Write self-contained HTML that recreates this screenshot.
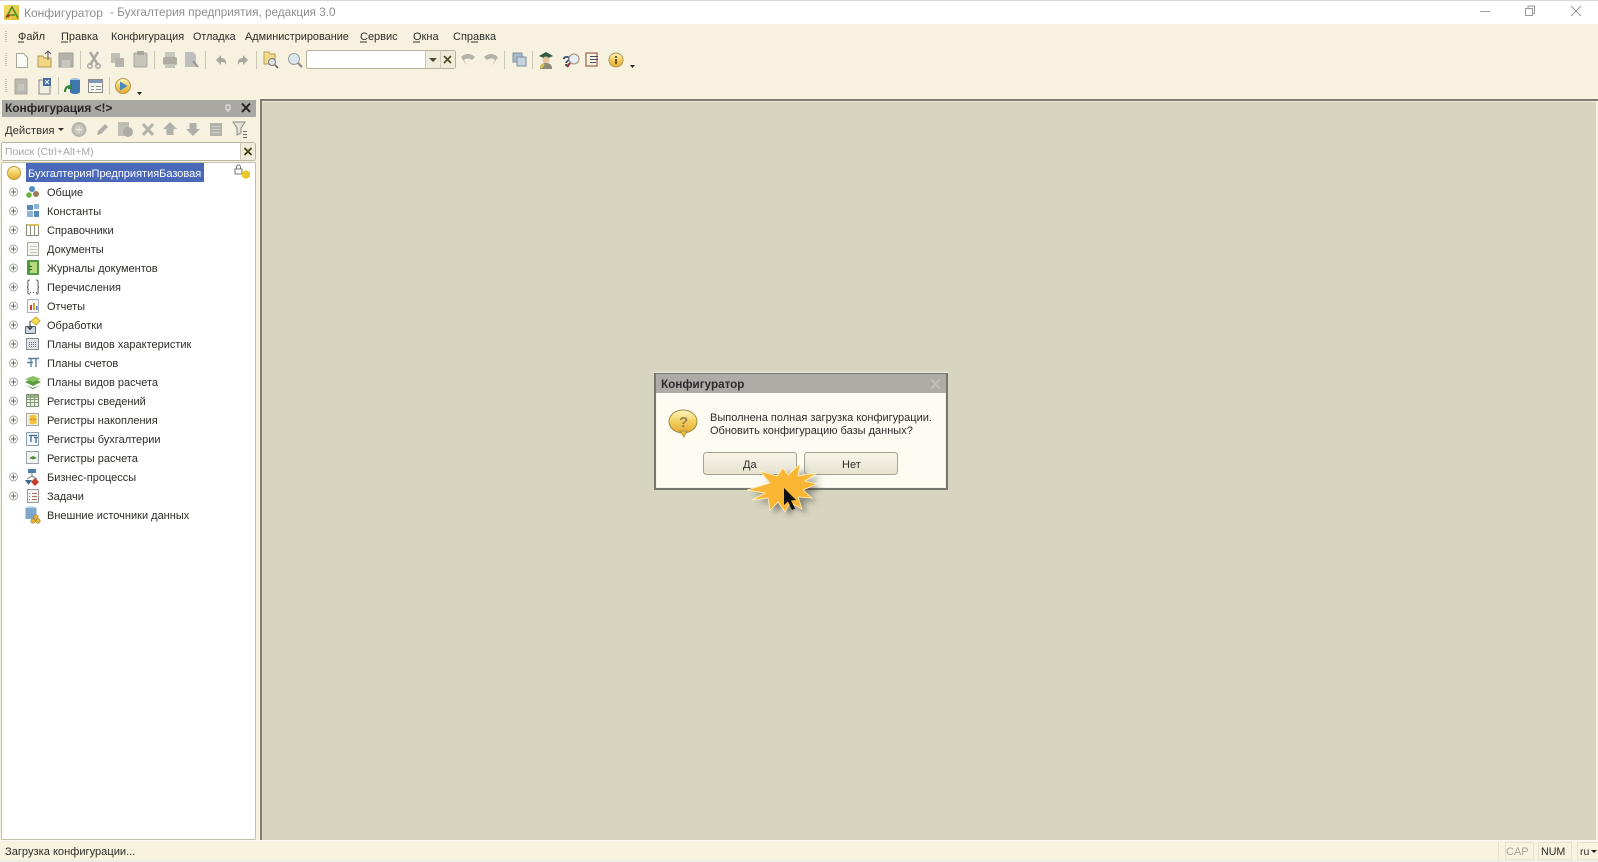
<!DOCTYPE html>
<html><head><meta charset="utf-8"><title>Конфигуратор</title>
<style>
html,body{margin:0;padding:0;width:1598px;height:862px;overflow:hidden;background:#f7f1df}
svg{display:block;filter:blur(.35px)}
text{font-family:"Liberation Sans",sans-serif;font-size:11px;fill:#2c2c28}
.m{fill:#33332e}
.sep{stroke:#cbc7b5;stroke-width:1}
</style></head><body>
<svg width="1598" height="862" viewBox="0 0 1598 862" xmlns="http://www.w3.org/2000/svg">
<defs>
<linearGradient id="ball" x1="0" y1="0" x2="0" y2="1"><stop offset="0" stop-color="#fff8c4"/><stop offset=".5" stop-color="#f2cf60"/><stop offset="1" stop-color="#e4aa30"/></linearGradient>
<linearGradient id="ic" x1="0" y1="0" x2="1" y2="1"><stop offset="0" stop-color="#f5e070"/><stop offset="1" stop-color="#dcb830"/></linearGradient>
<linearGradient id="btn" x1="0" y1="0" x2="0" y2="1"><stop offset="0" stop-color="#f8f5ea"/><stop offset="1" stop-color="#e6e2d0"/></linearGradient>
<filter id="sh" x="-30%" y="-30%" width="160%" height="160%"><feGaussianBlur stdDeviation="3"/></filter>
<g id="exp"><circle cx="0" cy="0" r="4" fill="#fff" stroke="#a8a8a0"/><path d="M-2.500 0H2.500M0-2.500V2.500" stroke="#666" stroke-width="1"/></g>
</defs>

<!-- window background -->
<rect width="1598" height="862" fill="#f7f1df"/>
<rect width="1598" height="24" fill="#ffffff"/>
<rect width="1598" height="1" fill="#d8d8d8"/>
<!-- title bar -->
<rect x="4" y="5" width="15" height="15" fill="url(#ic)"/>
<path d="M6 18L12 7l6 11M9 15h6" fill="none" stroke="#4a8a28" stroke-width="1.500"/>
<circle cx="8" cy="16" r="1.500" fill="#c02010"/>
<text x="24" y="17" style="font-size:12px;fill:#8e8e8e">Конфигуратор</text>
<text x="110" y="16" style="font-size:11.750px;fill:#8e8e8e">- Бухгалтерия предприятия, редакция 3.0</text>
<path d="M1480 11.500h10" stroke="#a0a0a0" stroke-width="1"/>
<path d="M1528 8.500v-2.500h6.500v7.500h-2" fill="none" stroke="#999" stroke-width="1"/>
<rect x="1525.500" y="8.500" width="7" height="7" fill="none" stroke="#999"/>
<path d="M1571 6l10 10M1581 6l-10 10" stroke="#999" stroke-width="1"/>

<!-- menu -->
<path d="M5 31.500h2M5 33.500h2M5 35.500h2M5 37.500h2M5 39.500h2M5 41.500h2" stroke="#c8c4b0"/>
<g class="m">
<text x="18" y="40">Файл</text>
<text x="61" y="40">Правка</text>
<text x="111" y="40" style="font-size:10.900px">Конфигурация</text>
<text x="193" y="40" style="font-size:10.800px">Отладка</text>
<text x="245" y="40" style="font-size:10.900px">Администрирование</text>
<text x="360" y="40">Сервис</text>
<text x="413" y="40">Окна</text>
<text x="453" y="40">Справка</text>
</g>
<path d="M18 42h6M61 42h7M360 42h7M413 42h7M471 42h7" stroke="#33332e" stroke-width="1"/>

<!-- toolbar 1 -->
<path d="M5 53.500h2M5 55.500h2M5 57.500h2M5 59.500h2M5 61.500h2M5 63.500h2M5 65.500h2" stroke="#c8c4b0"/>
<path d="M16.500 53.500h7l4 4v10H16.500z" fill="#fbfbf6" stroke="#a6a699"/>
<path d="M38 56h5l1 2h7v9H38z" fill="#f2d683" stroke="#b2985a"/><path d="M48 60v-8M45 54l3-3 3 3" fill="none" stroke="#556" stroke-width="1"/>
<rect x="59" y="53" width="14" height="14" fill="#b4b3aa" stroke="#a0a098"/><rect x="62" y="60" width="8" height="7" fill="#c9c8be"/>
<path d="M80.500 51v18" class="sep"/>
<path d="M90 52l8 13M98 52l-8 13" stroke="#a9a8a0" stroke-width="2.500"/><circle cx="90" cy="66" r="2.300" fill="none" stroke="#a9a8a0" stroke-width="1.500"/><circle cx="98" cy="66" r="2.300" fill="none" stroke="#a9a8a0" stroke-width="1.500"/>
<rect x="111" y="53" width="9" height="10" fill="#c0bfb5"/><rect x="115" y="58" width="9" height="9" fill="#b6b5ab"/>
<rect x="134" y="53" width="13" height="14" rx="1" fill="#c6c5bb" stroke="#a8a79d"/><rect x="137" y="51" width="7" height="4" fill="#a8a79d"/>
<path d="M154.500 51v18" class="sep"/>
<rect x="163" y="57" width="14" height="8" rx="2" fill="#aeada3"/><rect x="165" y="52" width="10" height="5" fill="#c8c7bd"/><rect x="165" y="64" width="10" height="4" fill="#c8c7bd"/>
<path d="M185 52h8l3 3v12h-11z" fill="#c0bfc0"/><path d="M193 61l5 6" stroke="#99988e" stroke-width="2"/>
<path d="M205.500 51v18" class="sep"/>
<path d="M216 60l5-5v3c4 0 6 3 5 7-1-3-3-3-5-3v3z" fill="#aaa99f"/>
<path d="M248 60l-5-5v3c-4 0-6 3-5 7 1-3 3-3 5-3v3z" fill="#aaa99f"/>
<path d="M256.500 51v18" class="sep"/>
<path d="M264 52h5l1 2h5v10h-11z" fill="#f4dc8a" stroke="#b89c52"/><circle cx="272" cy="62" r="3.500" fill="#dbe3ea" stroke="#777"/><path d="M275 65l3 3" stroke="#555" stroke-width="1.500"/>
<circle cx="294" cy="59" r="5.500" fill="#dce6ef" stroke="#a0a09c"/><path d="M298 63l4 4" stroke="#888" stroke-width="2"/>
<rect x="306.500" y="50.500" width="149" height="18" rx="2" fill="#fff" stroke="#b5b29a"/>
<rect x="425" y="51" width="30" height="17" fill="#efebda"/>
<path d="M425.500 51v17M440.500 51v17" stroke="#cfcbb8"/>
<path d="M429 58h8l-4 4z" fill="#4a4a30"/>
<path d="M444 56l7 7M451 56l-7 7" stroke="#4a4a20" stroke-width="1.600"/>
<path d="M461 57c4-4 10-4 14 0l-3 3c-3-2-6-2-8 0l3 6z" fill="#b3b2a8"/>
<path d="M498 57c-4-4-10-4-14 0l3 3c3-2 6-2 8 0l-3 6z" fill="#b3b2a8"/>
<path d="M504.500 51v18" class="sep"/>
<rect x="513" y="53" width="9" height="9" fill="#a9bdd0" stroke="#7d8ea0"/><rect x="517" y="57" width="9" height="9" fill="#c5d3e0" stroke="#7d8ea0"/>
<path d="M532.500 51v18" class="sep"/>
<path d="M539 56l7-4 7 4-7 3z" fill="#2f5a48"/><circle cx="546" cy="60" r="3.500" fill="#e3c49b"/><path d="M540 69c0-5 3-6 6-6s6 1 6 6z" fill="#8a8a78"/><path d="M541 68l3-4" stroke="#e6c83c" stroke-width="2"/>
<text x="562" y="66" style="font-size:15px;font-weight:bold;fill:#304a70">?</text><circle cx="574" cy="59" r="5" fill="#e6eef3" stroke="#a09078"/><path d="M570 63l-3 4" stroke="#a03030" stroke-width="2"/>
<rect x="586" y="53" width="11" height="13" fill="#fbf6e4" stroke="#98402c"/><path d="M590 56.500h8M590 59.500h8M590 62.500h6" stroke="#46506a"/>
<circle cx="616" cy="60" r="7" fill="url(#ball)" stroke="#b69450"/><rect x="615" y="59" width="2" height="5" fill="#7a5a20"/><rect x="615" y="56" width="2" height="2" fill="#7a5a20"/>
<path d="M630 65h5l-2.500 3z" fill="#222"/>

<!-- toolbar 2 -->
<path d="M5 79.500h2M5 81.500h2M5 83.500h2M5 85.500h2M5 87.500h2M5 89.500h2M5 91.500h2" stroke="#c8c4b0"/>
<rect x="15" y="79" width="12" height="15" fill="#bab9af" stroke="#a8a79d"/><rect x="18" y="84" width="6" height="7" fill="#c7c6bc"/>
<rect x="39" y="80" width="11" height="14" fill="#f0eee2" stroke="#8a8a80"/><rect x="43" y="78" width="8" height="8" fill="#3f6ca4"/><path d="M45 80l4 4M49 80l-4 4" stroke="#fff"/>
<path d="M58.500 77v18" class="sep"/>
<ellipse cx="75" cy="80" rx="5" ry="2" fill="#9ec4e2"/><rect x="70" y="80" width="10" height="12" fill="#3f78ad"/><ellipse cx="75" cy="92" rx="5" ry="2" fill="#3f78ad"/><path d="M65 92c0-4 2-6 6-6M71 84v4h-3" fill="none" stroke="#2d8a3d" stroke-width="2"/>
<rect x="88.500" y="79.500" width="14" height="13" fill="#f6f6f2" stroke="#8a8a88"/><rect x="89" y="80" width="13" height="3" fill="#7d99b8"/><path d="M91 86.500h3M91 89.500h3M96 86.500h5M96 89.500h5" stroke="#8a8a88"/>
<path d="M109.500 77v18" class="sep"/>
<circle cx="123" cy="86" r="7.500" fill="url(#ball)" stroke="#b69450"/><path d="M120 81.500l7.500 4.500-7.500 4.500z" fill="#4a86c0"/>
<path d="M137 92h5l-2.500 3z" fill="#222"/>

<!-- client -->
<rect x="260" y="99" width="1338" height="742" fill="#d7d4bf"/>
<rect x="260" y="99" width="1338" height="2" fill="#7f7d72"/>
<rect x="260" y="99" width="2" height="742" fill="#7f7d72"/>
<rect x="262" y="101" width="1336" height="1" fill="#ecead8"/>
<rect x="1596" y="101" width="2" height="740" fill="#f5f2e5"/>

<!-- left panel -->
<rect x="2" y="100" width="254" height="17" fill="#aaa8a2"/>
<text x="5" y="112" style="font-size:11.900px;font-weight:bold;fill:#262626">Конфигурация &lt;!&gt;</text>
<rect x="226" y="105" width="4" height="5" rx="1" fill="none" stroke="#f0f0f0"/><path d="M228 110v2" stroke="#eee"/>
<path d="M242 103.500l8 8.500M250 103.500l-8 8.500" stroke="#222" stroke-width="2"/>
<text x="5" y="134" style="font-size:11.300px" class="m">Действия</text>
<path d="M58 128h6l-3 3z" fill="#333"/>
<circle cx="79" cy="129.500" r="7.500" fill="#b8b7ad"/><circle cx="79" cy="129.500" r="5" fill="#c8c7bd"/><path d="M76 129.500h6M79 126.500v6" stroke="#eeeee4"/>
<path d="M97 135l1-4 7-7 3 3-7 7z" fill="#b0afa5"/>
<rect x="118" y="122" width="11" height="14" fill="#c0bfb5"/><circle cx="128" cy="132" r="5" fill="#adaca2"/>
<path d="M143 124l10 11M153 124l-10 11" stroke="#b3b2a8" stroke-width="3"/>
<path d="M170 122l7 7h-3.500v6h-7v-6H163z" fill="#aeb0aa"/>
<path d="M193 136l7-7h-3.500v-6h-7v6H186z" fill="#aeb0aa"/>
<rect x="210" y="123" width="12" height="13" fill="#b5b4aa"/><path d="M212 126.500h8M212 129.500h8M212 132.500h8" stroke="#ccc"/>
<path d="M233 122h12l-4 6v5l-4 2v-7z" fill="#e4e3da" stroke="#8a8a80"/><path d="M243 131.500h4M243 134.500h4M243 137.500h4" stroke="#6b6b60"/>

<rect x="1.500" y="142.500" width="254" height="18" rx="2" fill="#fff" stroke="#bab7a0"/>
<text x="5" y="155" style="font-size:10.500px;fill:#a6a6a6">Поиск (Ctrl+Alt+M)</text>
<rect x="241" y="143" width="14" height="17" fill="#efebda"/><path d="M240.500 143v17" stroke="#cfcbb8"/>
<path d="M244.500 148l7 7M251.500 148l-7 7" stroke="#3f3f18" stroke-width="1.800"/>

<!-- tree -->
<rect x="1.500" y="162.500" width="254" height="677" rx="1" fill="#fff" stroke="#c3c0a8"/>
<ellipse cx="14" cy="173" rx="6.500" ry="6.500" fill="url(#ball)" stroke="#c49b3a"/>
<rect x="26" y="163" width="178" height="19" fill="#4a68b8"/>
<text x="28" y="177" style="fill:#fff">БухгалтерияПредприятияБазовая</text>
<rect x="235" y="169" width="7" height="5" fill="none" stroke="#777"/><path d="M236.500 169v-2a2 2 0 0 1 4 0v2" fill="none" stroke="#777"/>
<path d="M242 172l4-2 4 2v5l-4 2-4-2z" fill="#e9c82d"/>

<g>
<use href="#exp" x="13.500" y="192"/><use href="#exp" x="13.500" y="211"/><use href="#exp" x="13.500" y="230"/><use href="#exp" x="13.500" y="249"/><use href="#exp" x="13.500" y="268"/><use href="#exp" x="13.500" y="287"/><use href="#exp" x="13.500" y="306"/><use href="#exp" x="13.500" y="325"/><use href="#exp" x="13.500" y="344"/><use href="#exp" x="13.500" y="363"/><use href="#exp" x="13.500" y="382"/><use href="#exp" x="13.500" y="401"/><use href="#exp" x="13.500" y="420"/><use href="#exp" x="13.500" y="439"/><use href="#exp" x="13.500" y="477"/><use href="#exp" x="13.500" y="496"/>
</g>
<!-- общие -->
<circle cx="32" cy="189" r="3" fill="#4f8fc4"/><circle cx="29" cy="195" r="2.800" fill="#6fb03f"/><circle cx="36" cy="194" r="3" fill="#9c7a52"/>
<!-- константы -->
<rect x="27" y="205" width="6" height="5" fill="#5a8ab8"/><rect x="34" y="204" width="5" height="5" fill="#8db5d5"/><rect x="27" y="211" width="6" height="6" fill="#8db5d5"/><rect x="34" y="211" width="5" height="6" fill="#5a8ab8"/>
<!-- справочники -->
<rect x="26.500" y="224.500" width="12" height="11" fill="#fff" stroke="#8d8d82"/><rect x="27" y="224" width="12" height="2" fill="#e2c25c"/><path d="M30.500 225v10M34.500 225v10" stroke="#8d8d82"/>
<!-- документы -->
<rect x="27.500" y="242.500" width="11" height="13" fill="#f5f5f0" stroke="#a8a8a0"/><path d="M30 246.500h7M30 249.500h7M30 252.500h7" stroke="#c4c4bc"/>
<!-- журналы -->
<rect x="27" y="260" width="12" height="15" rx="1" fill="#4f9a45"/><rect x="30" y="262" width="7" height="11" fill="#b7dc7e"/><path d="M29 266.500h3M29 269.500h3" stroke="#2c6a2c"/>
<!-- перечисления -->
<path d="M30 280c-3 0-2 2-2 4s0 3-1 3c1 0 1 1 1 3s-1 4 2 4M36 280c3 0 2 2 2 4s0 3 1 3c-1 0-1 1-1 3s1 4-2 4" fill="none" stroke="#555" stroke-width="1"/><path d="M30 292.500h1M33 292.500h1M36 292.500h1" stroke="#555"/>
<!-- отчеты -->
<rect x="27.500" y="299.500" width="11" height="13" fill="#f5f6fa" stroke="#aab0bc"/><rect x="30" y="305" width="2" height="5" fill="#c04030"/><rect x="33" y="303" width="2" height="7" fill="#e0a030"/><rect x="36" y="306" width="1.500" height="4" fill="#4a80b0"/>
<!-- обработки -->
<path d="M31 321l5-4 4 4-4 4z" fill="#f4dd55" stroke="#c8a830"/><rect x="25.500" y="326.500" width="10" height="7" rx="1" fill="#ccd8e4" stroke="#56606a"/><path d="M30 321v8M27.500 326.500l2.500 3 2.500-3" fill="none" stroke="#333"/>
<!-- планы видов хар -->
<rect x="26.500" y="338.500" width="12" height="11" fill="#dfe4ea" stroke="#8a8f95"/><path d="M29 342.500h8M29 344.500h8M29 346.500h8" stroke="#6a6f75" stroke-dasharray="1 1"/>
<!-- планы счетов -->
<path d="M28 358.500h10M31 358v9M34 358.500h5M36 358v9M27 362.500h6" stroke="#5d8098" stroke-width="1.400" fill="none"/>
<!-- планы видов расчета -->
<path d="M25 382l8-4 8 4-8 4z" fill="#5a9a40"/><path d="M25 379l8-3 8 3-8 3z" fill="#89c060"/><path d="M25 385l8 3 8-3-8 4z" fill="#3f7c30"/>
<!-- регистры сведений -->
<rect x="26.500" y="394.500" width="12" height="12" fill="#e4efdc" stroke="#7f8f75"/><rect x="27" y="395" width="11" height="3" fill="#9ab87a"/><path d="M30.500 395v11M34.500 395v11M27 399.500h11M27 402.500h11" stroke="#8a9a80"/>
<!-- регистры накопления -->
<rect x="26.500" y="413.500" width="12" height="12" fill="#f2f2ec" stroke="#a8a8a0"/><ellipse cx="33" cy="416.500" rx="4" ry="1.700" fill="#f0c83a"/><ellipse cx="33" cy="419.500" rx="4" ry="1.700" fill="#e6a92a"/><ellipse cx="33" cy="422.500" rx="4" ry="1.700" fill="#f0c83a"/>
<!-- регистры бухгалтерии -->
<rect x="26.500" y="432.500" width="12" height="13" fill="#f2f6fa" stroke="#8ea2b5"/><path d="M29 435.500h8M31 435v7M34 437.500h4M36 437v6" stroke="#3f6a88" stroke-width="1.300" fill="none"/>
<!-- регистры расчета -->
<rect x="26.500" y="451.500" width="12" height="12" fill="#f2f4f4" stroke="#9aa2a8"/><path d="M29 458l4-2 4 2-4 1.500z" fill="#4f8a38"/>
<!-- бизнес-процессы -->
<rect x="28" y="469" width="8" height="4" fill="#4f7fb0"/><path d="M32 473v3M27 479l5-3 5 3" fill="none" stroke="#777"/><path d="M25 480h7l-3.500 5z" fill="#3f6a90"/><path d="M35 478l4 4-4 4-4-4z" fill="#c83a2a"/>
<!-- задачи -->
<rect x="27.500" y="489.500" width="11" height="13" fill="#f4f4f0" stroke="#999"/><path d="M29 493.500h1M32 493.500h5M29 496.500h1M32 496.500h5M29 499.500h1M32 499.500h5" stroke="#b06a60"/>
<!-- внешние -->
<ellipse cx="31" cy="508" rx="5.500" ry="1.800" fill="#b9d2e6"/><rect x="25.500" y="508" width="11" height="11" fill="#7da8cc"/><circle cx="36" cy="517" r="2.200" fill="#e8b83c" stroke="#9a7420" stroke-width=".6"/><circle cx="33" cy="521" r="2.200" fill="#e8b83c" stroke="#9a7420" stroke-width=".6"/><circle cx="38" cy="521" r="2.200" fill="#e8b83c" stroke="#9a7420" stroke-width=".6"/>

<g>
<text x="47" y="196">Общие</text>
<text x="47" y="215">Константы</text>
<text x="47" y="234">Справочники</text>
<text x="47" y="253">Документы</text>
<text x="47" y="272">Журналы документов</text>
<text x="47" y="291">Перечисления</text>
<text x="47" y="310">Отчеты</text>
<text x="47" y="329">Обработки</text>
<text x="47" y="348">Планы видов характеристик</text>
<text x="47" y="367">Планы счетов</text>
<text x="47" y="386">Планы видов расчета</text>
<text x="47" y="405">Регистры сведений</text>
<text x="47" y="424">Регистры накопления</text>
<text x="47" y="443">Регистры бухгалтерии</text>
<text x="47" y="462">Регистры расчета</text>
<text x="47" y="481">Бизнес-процессы</text>
<text x="47" y="500">Задачи</text>
<text x="47" y="519">Внешние источники данных</text>
</g>

<!-- dialog -->
<rect x="654" y="372" width="294" height="118" fill="#77766f"/>
<rect x="654" y="372" width="294" height="1" fill="#efeee6"/>
<rect x="656" y="374" width="290" height="114" fill="#f5f3e8"/>
<rect x="656" y="374" width="290" height="19" fill="#aeaca6"/>
<text x="661" y="388" style="font-size:11.700px;font-weight:bold;fill:#2c2c2c">Конфигуратор</text>
<path d="M931 379l9 10M940 379l-9 10" stroke="#c2c0ba" stroke-width="1.800"/>
<rect x="657" y="393" width="288" height="94" fill="#fdfcf2"/>
<ellipse cx="683" cy="421.500" rx="14" ry="11.500" fill="url(#ball)" stroke="#a08a40"/><path d="M680 431l4 6 3-6z" fill="#e8bb38" stroke="#a08a40" stroke-width=".7"/>
<text x="679" y="427" style="font-size:15px;font-weight:bold;fill:#9a8050">?</text>
<text x="710" y="421">Выполнена полная загрузка конфигурации.</text>
<text x="710" y="434">Обновить конфигурацию базы данных?</text>
<rect x="703.500" y="452.500" width="93" height="22" rx="3" fill="url(#btn)" stroke="#a6a48f"/>
<rect x="804.500" y="452.500" width="93" height="22" rx="3" fill="url(#btn)" stroke="#a6a48f"/>
<text x="743" y="468">Да</text>
<text x="842" y="468">Нет</text>

<!-- click burst + cursor -->
<polygon points="747,490 770,483 760,471 777,476 783,468 788,475 800,464 798,476 817,473 805,481 817,484 803,490 812,498 798,497 802,509 790,503 785,512 778,502 770,510 768,498 752,500 765,493" fill="#3a3a30" opacity=".5" filter="url(#sh)" transform="translate(5 4)"/>
<polygon points="747,490 770,483 760,471 777,476 783,468 788,475 800,464 798,476 817,473 805,481 817,484 803,490 812,498 798,497 802,509 790,503 785,512 778,502 770,510 768,498 752,500 765,493" fill="#fbb534" stroke="#fff2c0" stroke-width=".8"/>
<path d="M784 488v17l4-3.500 4 8.500 3-1.500-4-8 5-.5z" fill="#101010"/>

<!-- status bar -->
<rect y="841" width="1598" height="21" fill="#f7f3df"/>
<rect y="840" width="1598" height="1" fill="#fbfaf0"/>
<text x="5" y="855" style="font-size:11.100px">Загрузка конфигурации...</text>
<path d="M1498.500 842v18" stroke="#e4e0cc"/>
<rect x="1505.500" y="842.500" width="28" height="17" fill="none" stroke="#e6e2cd"/>
<rect x="1538.500" y="842.500" width="33" height="17" fill="none" stroke="#e6e2cd"/>
<rect x="1577.500" y="842.500" width="21" height="17" fill="none" stroke="#e6e2cd"/>
<text x="1506" y="855" style="font-size:11px;fill:#a8a696">CAP</text>
<text x="1541" y="855" style="font-size:10.700px">NUM</text>
<text x="1580" y="855" style="font-size:10.500px">ru</text>
<path d="M1591 850h6l-3 3z" fill="#222"/>
<rect y="860" width="1598" height="2" fill="#eeeee6"/>
</svg>
</body></html>
